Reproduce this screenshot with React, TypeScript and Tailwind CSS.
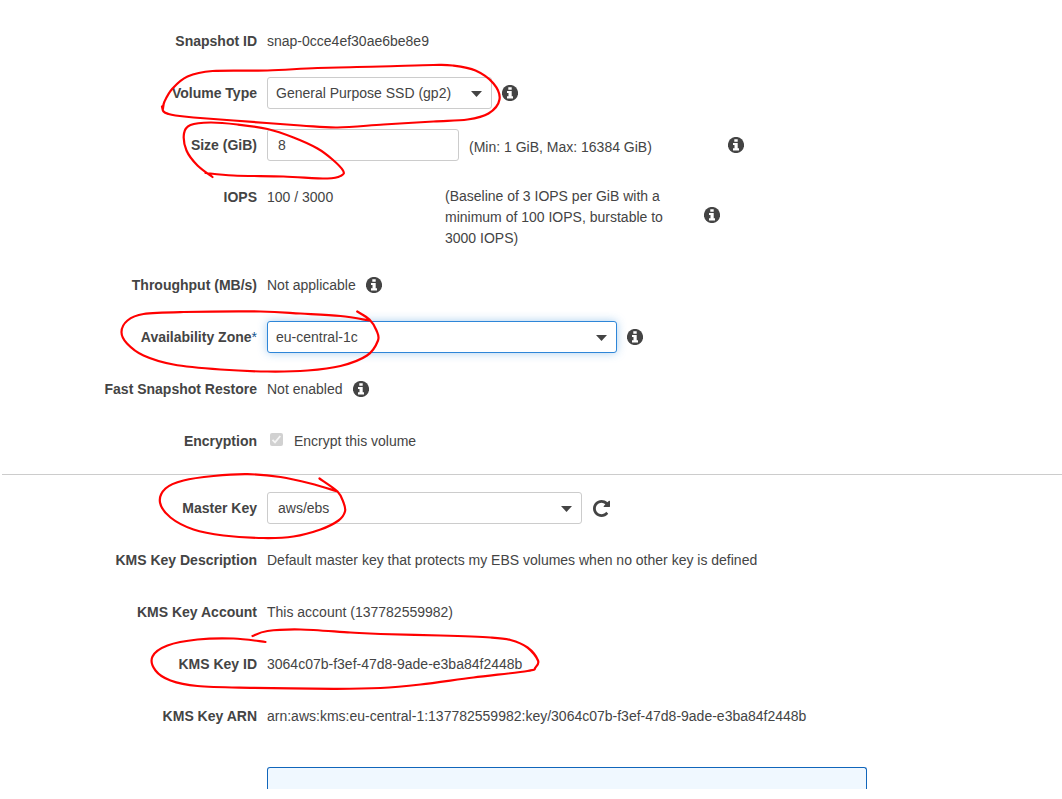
import type { ReactNode } from 'react';

type Point = [number, number];

const STROKES: Point[][] = [
  [[161.5, 106], [163, 111], [168, 113.5], [175, 115], [193, 117], [233, 120], [300, 125], [337, 127], [383, 124], [433, 121], [467, 119], [488, 113], [499, 99], [493, 83], [475, 70], [452, 65], [433, 64.5], [380, 66], [317, 67.5], [267, 70], [212, 70.5], [187, 76], [172, 88], [164, 101], [162.5, 108]],
  [[212, 176.5], [197, 165], [186, 150], [183.5, 133], [190, 124.5], [210, 122], [237, 124], [267, 128.5], [293, 137], [317, 148], [332, 159], [342.5, 170], [341, 175], [327, 178], [283, 176], [233, 175], [205, 172.5]],
  [[356.7, 311], [369, 319], [376, 330], [377.5, 340], [366.5, 355], [340, 365.5], [307, 370], [267, 371], [220, 369], [173, 364], [143, 355], [126.5, 343], [121, 331.5], [127, 320], [143, 313.5], [183, 311.5], [260, 311], [300, 313], [340, 315.5], [369, 320]],
  [[319, 478], [337, 491], [343, 502], [344.5, 511], [338, 520], [320, 529], [293, 536], [263, 537.5], [223, 535], [193, 529], [170, 517], [159.5, 502], [165, 488], [183, 480], [213, 475.5], [247, 473.7], [280, 476.5], [310, 483], [337, 491]],
  [[265, 641.5], [233, 638], [197, 639], [167, 645], [152, 656], [155, 670], [170, 680], [197, 685.5], [250, 687.3], [333, 688.3], [380, 687.5], [420, 684], [473, 677], [527, 670.5], [535, 667], [537.5, 660], [527, 647], [510, 639.5], [490, 637], [440, 635], [380, 633.5], [350, 632], [300, 629], [267, 630.5], [252, 635.5]],
];

// Catmull-Rom spline through the points, written as cubic Béziers.
function smooth(points: Point[]) {
  let d = `M${points[0][0]} ${points[0][1]}`;
  for (let i = 0; i < points.length - 1; i++) {
    const a = points[Math.max(i - 1, 0)];
    const b = points[i];
    const c = points[i + 1];
    const e = points[Math.min(i + 2, points.length - 1)];
    d += `C${b[0] + (c[0] - a[0]) / 6} ${b[1] + (c[1] - a[1]) / 6} ${c[0] - (e[0] - b[0]) / 6} ${c[1] - (e[1] - b[1]) / 6} ${c[0]} ${c[1]}`;
  }
  return d;
}

function Info({ className = '' }: { className?: string }) {
  return (
    <svg viewBox="0 0 16 16" className={`size-4 shrink-0 ${className}`}>
      <circle cx="8" cy="8" r="8.1" className="fill-[#444]" />
      <path d="M6.3 2.3h3.4v2.5H6.3zM5 6h4.7v5.3H11v2.2H5v-2.2h1.5V8.1H5z" className="fill-white" />
    </svg>
  );
}

function Repeat({ className = '' }: { className?: string }) {
  return (
    <svg viewBox="128 128 1536 1536" className={`size-[17px] shrink-0 fill-[#444] ${className}`}>
      <path d="M1664 256v448q0 26-19 45t-45 19h-448q-42 0-59-40-17-39 14-69l138-138q-148-137-349-137-104 0-198.5 40.5t-163.5 109.5-109.5 163.5-40.5 198.5 40.5 198.5 109.5 163.5 163.5 109.5 198.5 40.5q119 0 225-52t179-147q7-10 23-12 15 0 25 9l137 138q9 8 9.5 20.5t-7.5 22.5q-109 132-264 204.5t-327 72.5q-156 0-298-61t-245-164-164-245-61-298 61-298 164-245 245-164 298-61q147 0 284.5 55.5t244.5 156.5l130-129q29-31 70-14 39 17 39 59z" />
    </svg>
  );
}

function Select({ className, children }: { className: string; children: ReactNode }) {
  return (
    <div className={`flex h-8 shrink-0 items-center justify-between rounded-[3px] border bg-white pr-[9px] ${className}`}>
      <span>{children}</span>
      <svg viewBox="0 0 11 6" className="mt-0.5 h-1.5 w-[11px] fill-[#444]">
        <path d="M0 0h11L5.5 6z" />
      </svg>
    </div>
  );
}

function Row({ label, required, children }: { label: string; required?: boolean; children: ReactNode }) {
  return (
    <div className="flex h-[52px] items-center gap-2.5">
      <div className="w-[257px] shrink-0 text-right font-bold">
        {label}
        {required && <span className="font-normal text-[#16568f]">*</span>}
      </div>
      {children}
    </div>
  );
}

export default function App() {
  return (
    <main className="relative h-[799px] w-[1062px] overflow-hidden bg-white pt-[15px] font-['Liberation_Sans',Arial,sans-serif] text-[14px] leading-[21px] whitespace-nowrap text-[#444]">
      <Row label="Snapshot ID">snap-0cce4ef30ae6be8e9</Row>
      <Row label="Volume Type">
        <Select className="w-[225px] border-[#ccc] pl-2">General Purpose SSD (gp2)</Select>
        <Info />
      </Row>
      <Row label="Size (GiB)">
        <div className="flex h-8 w-48 shrink-0 items-center rounded-[3px] border border-[#ccc] pl-2.5">8</div>
        <span className="w-[249px] pt-[5px]">(Min: 1 GiB, Max: 16384 GiB)</span>
        <Info />
      </Row>
      <div className="flex h-[88px] items-start gap-2.5 pt-4">
        <div className="w-[257px] shrink-0 text-right font-bold">IOPS</div>
        <span className="w-[168px]">100 / 3000</span>
        <span className="-mt-px w-[249px]">
          (Baseline of 3 IOPS per GiB with a<br />
          minimum of 100 IOPS, burstable to<br />
          3000 IOPS)
        </span>
        <Info className="mt-5" />
      </div>
      <Row label="Throughput (MB/s)">
        <span>Not applicable</span>
        <Info />
      </Row>
      <Row label="Availability Zone" required>
        <Select className="w-[350px] border-[#2e86d8] pl-2 shadow-[0_0_10px_rgba(46,134,216,0.4)]">eu-central-1c</Select>
        <Info />
      </Row>
      <Row label="Fast Snapshot Restore">
        <span>Not enabled</span>
        <Info />
      </Row>
      <Row label="Encryption">
        <div className="mb-[3px] ml-[3px] flex size-[13px] items-center justify-center rounded-[2px] bg-[#d1d1d1]">
          <svg viewBox="0 0 13 13" className="size-[13px] fill-none stroke-[#f6f6f6] stroke-[1.8]">
            <path d="M2.5 6.8 5 9.3 10.3 3" />
          </svg>
        </div>
        <span className="ml-px">Encrypt this volume</span>
      </Row>
      <hr className="mt-[7px] mb-[7px] ml-0.5 border-t border-[#ccc]" />
      <Row label="Master Key">
        <Select className="w-[315px] border-[#ccc] pl-2.5">aws/ebs</Select>
        <Repeat className="ml-px" />
      </Row>
      <Row label="KMS Key Description">Default master key that protects my EBS volumes when no other key is defined</Row>
      <Row label="KMS Key Account">This account (137782559982)</Row>
      <Row label="KMS Key ID">3064c07b-f3ef-47d8-9ade-e3ba84f2448b</Row>
      <Row label="KMS Key ARN">arn:aws:kms:eu-central-1:137782559982:key/3064c07b-f3ef-47d8-9ade-e3ba84f2448b</Row>
      <div className="mt-[25px] ml-[267px] h-[22px] w-[600px] rounded-t-[3px] border border-b-0 border-[#1166bb] bg-[#f0f8ff]" />
      <svg viewBox="-0.5 -0.5 1062 799" className="pointer-events-none absolute inset-0 size-full fill-none stroke-[#f00] stroke-[2.2]" strokeLinecap="round">
        {STROKES.map((points, i) => (
          <path key={i} d={smooth(points)} />
        ))}
      </svg>
    </main>
  );
}
